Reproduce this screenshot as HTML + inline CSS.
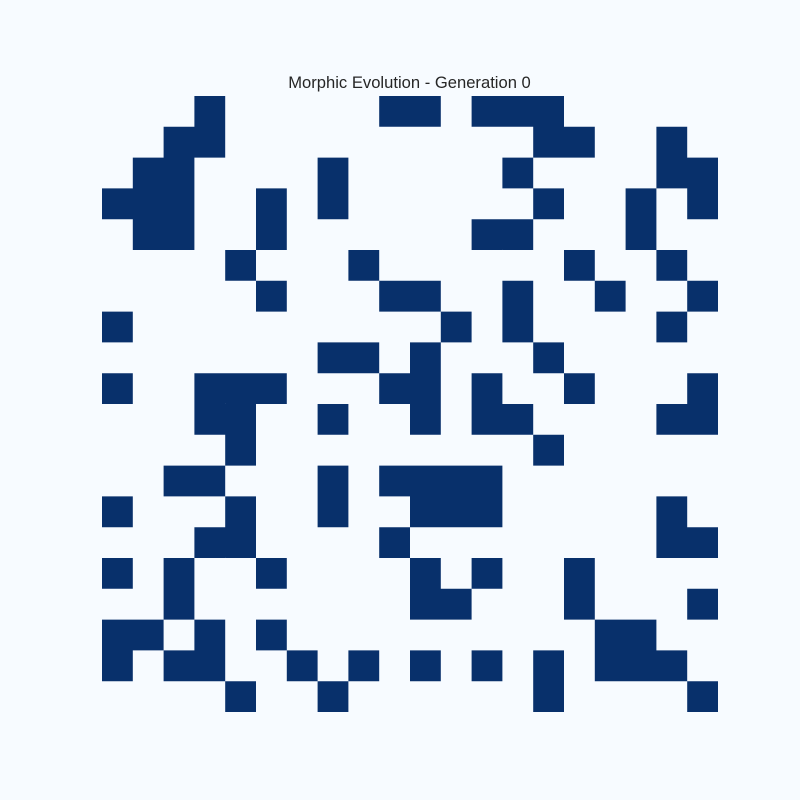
<!DOCTYPE html>
<html><head><meta charset="utf-8"><style>
html,body{margin:0;padding:0;background:#f7fbff;}
svg{display:block}
</style></head><body>
<svg width="800" height="800" xmlns="http://www.w3.org/2000/svg">
<rect width="800" height="800" fill="#f7fbff"/>
<text x="409.5" y="88" text-anchor="middle" font-family="Liberation Sans, DejaVu Sans, sans-serif" font-size="16.6" fill="#262626">Morphic Evolution - Generation 0</text>
<g id="g" fill="#08306b"></g>
</svg>
<script>
var rows=[
[3,9,10,12,13,14],
[2,3,14,15,18],
[1,2,7,13,18,19],
[0,1,2,5,7,14,17,19],
[1,2,5,12,13,17],
[4,8,15,18],
[5,9,10,13,16,19],
[0,11,13,18],
[7,8,10,14],
[0,3,4,5,9,10,12,15,19],
[3,4,7,10,12,13,18,19],
[4,14],
[2,3,7,9,10,11,12],
[0,4,7,10,11,12,18],
[3,4,9,18,19],
[0,2,5,10,12,15],
[2,10,11,15,19],
[0,1,3,5,16,17],
[0,2,3,6,8,10,12,14,16,17,18],
[4,7,14,19]
];
var s=30.8,d='';
rows.forEach(function(r,i){r.forEach(function(c){
var x=102+c*s,y=96+i*s;
d+='M'+x.toFixed(1)+' '+y.toFixed(1)+'h'+s+'v'+s+'h-'+s+'z';
});});
var p=document.createElementNS('http://www.w3.org/2000/svg','path');
p.setAttribute('d',d);
document.getElementById('g').appendChild(p);
</script>
</body></html>
